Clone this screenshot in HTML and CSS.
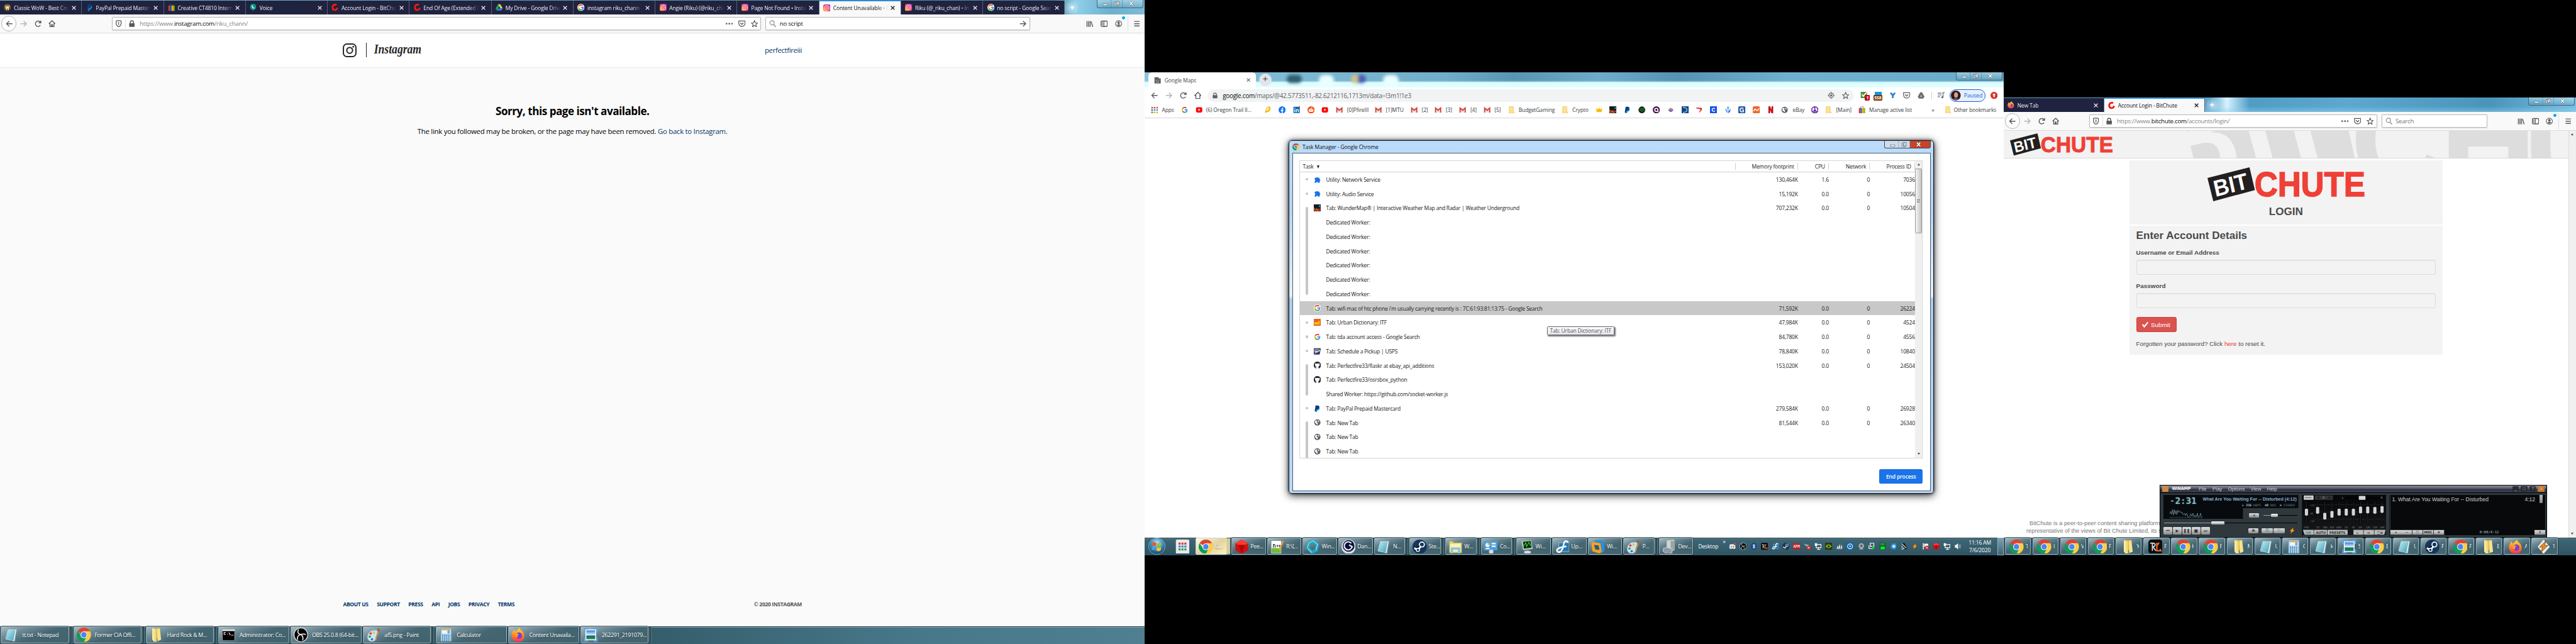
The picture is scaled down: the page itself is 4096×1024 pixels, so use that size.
FILE: index.html
```html
<!DOCTYPE html>
<html lang="en">
<head>
<meta charset="utf-8">
<title>Desktop</title>
<link rel="stylesheet" href="styles.css">
</head>
<body>
<svg class="defs" width="0" height="0">
<defs>
<linearGradient id="gIg" x1="0" y1="1" x2="1" y2="0"><stop offset="0" stop-color="#ffd04a"/><stop offset=".4" stop-color="#f5413a"/><stop offset=".7" stop-color="#d62f9a"/><stop offset="1" stop-color="#7a3be0"/></linearGradient>
<linearGradient id="gFf" x1="0" y1="0" x2="0" y2="1"><stop offset="0" stop-color="#ffe14a"/><stop offset=".5" stop-color="#ff8a1f"/><stop offset="1" stop-color="#ff2d5a"/></linearGradient>
<linearGradient id="gNote" x1="0" y1="0" x2="1" y2="1"><stop offset="0" stop-color="#c6f0f8"/><stop offset="1" stop-color="#3fa0b8"/></linearGradient>
<linearGradient id="gFold" x1="0" y1="0" x2="1" y2="0"><stop offset="0" stop-color="#fdf3b0"/><stop offset="1" stop-color="#e5c04f"/></linearGradient>
<linearGradient id="gSky" x1="0" y1="0" x2="0" y2="1"><stop offset="0" stop-color="#2f7fd8"/><stop offset=".55" stop-color="#e8f6ff"/><stop offset=".6" stop-color="#1c6b4c"/><stop offset="1" stop-color="#1d8f7d"/></linearGradient>
<radialGradient id="gOrb" cx=".5" cy=".3" r=".75"><stop offset="0" stop-color="#bfe6f5"/><stop offset=".5" stop-color="#3f88b5"/><stop offset="1" stop-color="#0d3a5c"/></radialGradient>
<symbol id="chrome" viewBox="0 0 32 32"><path fill="#db4437" d="M16 16 2.1 8a16 16 0 0 1 27.8 0z"/><path fill="#ffcd40" d="M16 16 15 8h14.9A16 16 0 0 1 16 32z"/><path fill="#0f9d58" d="M16 16 22 20 16 32A16 16 0 0 1 2.1 8l7 11z"/><circle cx="16" cy="16" r="7.5" fill="#f4f6fb"/><circle cx="16" cy="16" r="6" fill="#4a86ee"/></symbol>
<symbol id="firefox" viewBox="0 0 32 32"><path fill="url(#gFf)" d="M18 0c1 5 6 6 9 11 5 9 1 20-10 21C6 33-1 24 1 14c1-4 3-7 6-10 0 2 1 4 2 5 2-3 6-4 9-9z"/><circle cx="17" cy="18" r="7" fill="#7540d6"/><path fill="#ff9a2a" d="M8 14c4-3 8-1 9 2-3 0-4 2-2 5-5 2-8-2-7-7z"/></symbol>
<symbol id="notepad" viewBox="0 0 32 32"><path fill="#8b9a9e" d="m9 3 19-1-4 29-4 1z"/><path fill="#f5fafb" d="M9 3 27 4 22 30 3 26z"/><path fill="url(#gNote)" d="M8 4 25 5 20 29 2 25z"/><path stroke="#6f7f84" stroke-width="1.5" stroke-dasharray="1.5 1.5" d="M9 3h18"/></symbol>
<symbol id="folder" viewBox="0 0 32 32"><path fill="#d8b04a" d="M8 1h14l2 24-3 6z"/><path fill="url(#gFold)" d="m7 1 10 3v26l3 1-9 1-4-6z"/><path fill="#f7e38d" d="m18 3 6-2 3 26-8 3z"/></symbol>
<symbol id="cmd" viewBox="0 0 32 32"><path fill="#8c9398" d="M1 3h30v26H1z"/><path fill="#dfe6ea" d="M2 4h28v3H2z"/><path d="M3 8h26v20H3z"/><path stroke="#fff" stroke-width="1.5" fill="none" d="M10 11H6v4h4M14 12v1m0 2v1m3-5 3 6m2 0h5"/></symbol>
<symbol id="obs" viewBox="0 0 32 32"><circle cx="16" cy="16" r="16" fill="#eee"/><circle cx="16" cy="16" r="14.5"/><path fill="none" stroke="#ddd" stroke-width="2.5" d="M11 4c-3 5-2 9 3 11 5 1 8-3 13 1M15 15c-5 3-8 5-6 12m5-12c6 2 8 6 6 13"/></symbol>
<symbol id="paint" viewBox="0 0 32 32"><path fill="#c9e4f3" stroke="#8fb9cf" d="M15 6c9-2 13 4 10 9-2 4-4 2-4 7 0 6-4 9-9 9C5 31 1 26 2 19S8 7 15 6z"/><circle cx="9" cy="13" r="2.6" fill="#e33"/><circle cx="16" cy="11" r="2.6" fill="#f5c22a"/><circle cx="7" cy="20" r="2.6" fill="#38a838"/><circle cx="12" cy="26" r="2.6" fill="#2d6fd0"/><path stroke="#c68a4e" stroke-width="3" d="m20 29 6-22"/><path fill="#a2622d" d="m24 7 2-7 3 2-1 7z"/></symbol>
<symbol id="calc" viewBox="0 0 32 32"><rect x="4" y="1" width="24" height="30" rx="2" fill="#b8dcf2" stroke="#4a87b5"/><path fill="#f59b2f" d="M6 3h20v3H6z"/><path fill="#e9f7ff" d="M7 6h18v7H7z"/><path stroke="#3a6fa5" stroke-width="2.4" stroke-dasharray="2.6 2" d="M7 17h19M7 21h19M7 25h19M7 29h19"/><path stroke="#135" d="M20 7h3v5h-3z" fill="none"/></symbol>
<symbol id="photo" viewBox="0 0 32 32"><path fill="#fff" d="M4 4h24v24H4z"/><path fill="url(#gSky)" d="M6 6h20v20H6z"/><path fill="none" stroke="#5aa6e8" stroke-width="3" d="M10 2H2v8m20-8h8v8M10 30H2v-8m20 8h8v-8"/></symbol>
<symbol id="steam" viewBox="0 0 32 32"><circle cx="16" cy="16" r="16" fill="#14355c"/><path stroke="#fff" stroke-width="4" d="m4 19 8 4 9-11"/><circle cx="21" cy="11" r="5.5" fill="#14355c" stroke="#fff" stroke-width="2.4"/><circle cx="12" cy="23" r="3.6" fill="#14355c" stroke="#fff" stroke-width="2"/></symbol>
<symbol id="rl" viewBox="0 0 32 32"><rect width="32" height="32" rx="7" fill="#0a0d10"/><path fill="none" stroke="#d9dfe0" stroke-width="2.4" d="M4 8h5v17M9 8c8-1 8 8 1 8l7 9"/><path fill="none" stroke="#ff6a1f" stroke-width="3" d="M19 7v18h9l-2-4M19 14l5-7"/></symbol>
<symbol id="bolt" viewBox="0 0 32 32"><path fill="#eee" d="m16 0 14 16-14 16L3 16z"/><path fill="#f28a1c" stroke="#5b3312" d="M22 2 7 17h7L9 30l17-17h-8z"/></symbol>
<symbol id="orb" viewBox="0 0 36 36"><circle cx="18" cy="18" r="17.5" fill="url(#gOrb)" stroke="#8fc4dc"/><path fill="#e8572b" d="M8 11c3-2 6-2 9 0l-1 7c-3-2-6-2-9 0z"/><path fill="#8fc63e" d="M19 11c3 2 6 2 9 0l-1 7c-3 2-6 2-9 0z"/><path fill="#3fa4e8" d="M7 20c3-2 6-2 9 0l-1 7c-3-2-5-2-8 0z"/><path fill="#fbc52c" d="M18 20c3 2 6 2 9 0l-1 7c-3 2-6 2-9 0z"/></symbol>
<symbol id="gridapp" viewBox="0 0 32 32"><rect x="1" width="30" height="32" rx="3" fill="#e8eaec"/><path stroke="#e33b2e" stroke-width="4.5" stroke-dasharray="4.5 2" d="M7 9h18"/><path stroke="#3a78e0" stroke-width="4.5" stroke-dasharray="4.5 2" d="M7 15.500h18"/><path stroke="#2ba24c" stroke-width="4.500" stroke-dasharray="4.500 2" d="M7 22h18"/></symbol>
<symbol id="gem" viewBox="0 0 32 32"><path fill="#d40f0f" d="m16 0 14 8v16l-14 8L2 24V8z"/><path fill="#ff3b30" d="m16 0 14 8-7 4H9L2 8z"/><path fill="#a80808" d="m9 12 14 0-7 20z"/></symbol>
<symbol id="npp" viewBox="0 0 32 32"><path fill="#fff" stroke="#777" d="M3 2h23v29H3z"/><path fill="#6abf3a" d="M4 19h21v11H4z"/><path stroke="#222" stroke-width="1.6" d="M8 18v-7c3-1 4 1 4 3v4m3-4h4m1 0h4m-7-2v4m5-4v4" fill="none"/><path stroke="#e9a13a" stroke-width="3.5" d="m21 24 9-21"/></symbol>
<symbol id="vortex" viewBox="0 0 32 32"><path fill="none" stroke="#1ea6c4" stroke-width="7" d="m16 4 10 7-2 13-10 4-9-9 2-11z"/><path fill="none" stroke="#7be0f0" stroke-width="2" d="m16 2 11 9-4 12M4 19 7 8l9-5m-2 26-9-9"/></symbol>
<symbol id="dan" viewBox="0 0 32 32"><circle cx="16" cy="16" r="16" fill="#d9dde2"/><circle cx="16" cy="14" r="13" fill="#0a1238"/><path fill="none" stroke="#eef" stroke-width="3" d="M22 8a9 9 0 1 0 2 8l-7-4"/></symbol>
<symbol id="explorer" viewBox="0 0 32 32"><path fill="#e9c862" d="M2 4h8l2 3h18v23H2z"/><path fill="#fdf0b0" d="M4 9h24v18H4z"/><path fill="none" stroke="#7fc6e8" stroke-width="5" d="M8 31V20h16v11"/></symbol>
<symbol id="panel" viewBox="0 0 32 32"><rect x="1" y="3" width="30" height="21" rx="2" fill="#4a9fe0"/><circle cx="9" cy="12" r="4.500" fill="#fff"/><path fill="#f59b2f" d="M9 12V6a6 6 0 0 1 6 6z"/><path stroke="#fff" stroke-width="3" d="M18 9h9m-9 6h9M5 20h8"/><circle cx="17" cy="27" r="5" fill="#d7dade"/></symbol>
<symbol id="monitor" viewBox="0 0 32 32"><path fill="#b9bfbd" d="m4 3 22-2 4 20-22 3z"/><path fill="#062b08" d="m8 5 17-2 2 15-17 2z"/><path fill="none" stroke="#37e03c" stroke-width="1.500" d="m9 15 5-8 2 9 5-10 4 8"/><ellipse cx="18" cy="28" rx="8" ry="3.500" fill="#d7dade"/></symbol>
<symbol id="fig" viewBox="0 0 32 32"><path fill="#2277b5" stroke="#bde" d="M8 7h23v20H8z"/><path fill="none" stroke="#fff" stroke-width="3.500" d="M29 6c-8-8-10 2-11 8S12 32 5 27c-5-6 5-10 20-12"/></symbol>
<symbol id="ring" viewBox="0 0 32 32"><path fill="#2a8ddb" d="m9 1 14 1 8 6v19l-9 4-6-3z"/><path fill="#f6a21d" d="M2 9q2-4 8-3l12 2 3 18q-3 6-9 4L4 26z"/><path fill="#205a8f" d="m8 12 10 1 2 10-9-1z"/></symbol>
<symbol id="tower" viewBox="0 0 32 32"><path fill="#cfd3d5" d="m10 2 14-2 4 2v22l-12 4-6-3z"/><path fill="#9da3a6" d="m19 5 9-3v22l-9 3z"/><path fill="#8f9ba3" stroke="#e5e9eb" d="m2 20 8-3 12 4v9l-10 2-10-5z"/><circle cx="21" cy="4" r="2" fill="#6fd03f"/></symbol>
<symbol id="wow" viewBox="0 0 16 16"><circle cx="8" cy="8" r="8" fill="#6d542c"/><path fill="none" stroke="#ffe9b0" stroke-width="2" d="m4 4 2 8 2-6 2 6 2-8"/></symbol>
<symbol id="paypal" viewBox="0 0 16 16"><path fill="#159fe0" d="M6 5h7c1 5-2 7-5 7l-1 4H4z"/><path fill="#133a80" d="M4 1h5c3 0 4 2 3 5s-3 4-6 4l-.7 4H2z"/></symbol>
<symbol id="bag" viewBox="0 0 16 16"><path fill="none" stroke="#555" d="M5 5V3a3 3 0 0 1 6 0v2"/><path fill="#e53238" d="M1 4h4v12H1z"/><path fill="#0064d2" d="M5 4h3v12H5z"/><path fill="#f5af02" d="M8 4h3.500v12H8z"/><path fill="#86b817" d="M11.500 4H15v12h-3.500z"/></symbol>
<symbol id="voice" viewBox="0 0 16 16"><path fill="#0f9688" d="M8 0a7 7 0 0 1 1 13.800V16l-3-2.300A7 7 0 0 1 8 0z"/><path fill="none" stroke="#fff" stroke-width="2" d="M5.500 4c0 3 2 5.500 5 6"/></symbol>
<symbol id="bc" viewBox="0 0 16 16"><path fill="none" stroke="#f01c0f" stroke-width="4" d="M11.500 2.500C6 .5 2 4 2.500 9c.5 5 6 6.500 9.500 3l1.500-3"/></symbol>
<symbol id="drive" viewBox="0 0 16 16"><path fill="#11a861" d="m5.500 1 2.800 4.700L3 15l-3-4.500z"/><path fill="#ffcf48" d="M5.500 1h5L16 10.500h-5z"/><path fill="#3777e3" d="M5.600 10.500H16L13.300 15H3z"/></symbol>
<symbol id="g" viewBox="0 0 16 16"><circle cx="8" cy="8" r="8" fill="#fff"/><path fill="none" stroke="#ea4335" stroke-width="2.500" d="M3.200 5.500A5.400 5.400 0 0 1 12 4.200"/><path fill="none" stroke="#fbbc05" stroke-width="2.500" d="M3.300 10.600a5.400 5.400 0 0 1 0-5.200"/><path fill="none" stroke="#34a853" stroke-width="2.500" d="M3.300 10.600a5.400 5.400 0 0 0 8.400 1.500"/><path fill="none" stroke="#4285f4" stroke-width="2.500" d="M8 8h5.300q0 3-2 4.400"/></symbol>
<symbol id="ig" viewBox="0 0 16 16"><rect width="16" height="16" rx="4" fill="url(#gIg)"/><rect x="3" y="3" width="10" height="10" rx="3" fill="none" stroke="#fff" stroke-width="1.300"/><circle cx="8" cy="8" r="2.300" fill="none" stroke="#fff" stroke-width="1.300"/></symbol>
<symbol id="x" viewBox="0 0 10 10"><path stroke="currentColor" stroke-width="1.700" d="m1 1 8 8m0-8L1 9"/></symbol>
<symbol id="back" viewBox="0 0 16 16"><path fill="none" stroke="currentColor" stroke-width="2" d="M15 8H2m6-6L2 8l6 6"/></symbol>
<symbol id="fwd" viewBox="0 0 16 16"><path fill="none" stroke="currentColor" stroke-width="2" d="M1 8h13M8 2l6 6-6 6"/></symbol>
<symbol id="reload" viewBox="0 0 16 16"><path fill="none" stroke="currentColor" stroke-width="2" d="M13 11a6 6 0 1 1 0-6m1-4v5H9"/></symbol>
<symbol id="home" viewBox="0 0 16 16"><path fill="none" stroke="currentColor" stroke-width="2" d="m1 8 7-6.500L15 8M3.500 7v8h9V7M7 15v-5h2v5"/></symbol>
<symbol id="chome" viewBox="0 0 16 16"><path fill="none" stroke="currentColor" stroke-width="2" d="m1 8 7-7 7 7h-2.500v7h-9V8z"/></symbol>
<symbol id="shield" viewBox="0 0 16 16"><path fill="none" stroke="currentColor" stroke-width="1.800" d="M2.500 2q5.500-2 11 0v5c0 4-2 6.500-5.500 8-3.500-1.500-5.500-4-5.500-8zM8 4v7"/></symbol>
<symbol id="lock" viewBox="0 0 16 16"><path fill="currentColor" d="M2 7h12v8H2z"/><path fill="none" stroke="currentColor" stroke-width="2" d="M4.500 8V5a3.500 3.500 0 0 1 7 0v3"/></symbol>
<symbol id="dots" viewBox="0 0 16 16"><path fill="currentColor" d="M0 6.500h3.500v3H0zm6.200 0h3.600v3H6.200zm6.300 0H16v3h-3.500z"/></symbol>
<symbol id="pocket" viewBox="0 0 16 16"><path fill="none" stroke="currentColor" stroke-width="1.800" d="M1 2h14v5c0 4-3 7-7 7s-7-3-7-7zM4.500 6 8 9.500 11.500 6"/></symbol>
<symbol id="star" viewBox="0 0 16 16"><path fill="none" stroke="currentColor" stroke-width="1.600" d="m8 1 2 5 5 .3-4 3.400L12.500 15 8 12l-4.500 3L5 9.700 1 6.300 6 6z"/></symbol>
<symbol id="mag" viewBox="0 0 16 16"><circle cx="6.500" cy="6" r="4.800" fill="none" stroke="currentColor" stroke-width="1.600"/><path stroke="currentColor" stroke-width="2" d="m10 10 5 5.500"/></symbol>
<symbol id="lib" viewBox="0 0 16 16"><path stroke="currentColor" stroke-width="2" d="M2 2v13M5.500 2v13M9 2v13m2-12 4 12"/></symbol>
<symbol id="side" viewBox="0 0 16 16"><rect x="1" y="2" width="14" height="12" rx="2" fill="none" stroke="currentColor" stroke-width="2"/><path stroke="currentColor" stroke-width="1.500" d="M7.500 2v12M3 5.500h3M3 8h3m-3 2.500h3"/></symbol>
<symbol id="acct" viewBox="0 0 16 16"><circle cx="8" cy="8" r="6.800" fill="none" stroke="currentColor" stroke-width="1.500"/><path fill="currentColor" d="M8 3a2.700 3 0 0 1 0 6 2.700 3 0 0 1 0-6zM3.500 11q4.500-3 9 0Q8 16 3.500 11z"/></symbol>
<symbol id="menu" viewBox="0 0 16 16"><path stroke="currentColor" stroke-width="2" d="M2 3h12M2 8h12M2 13h12"/></symbol>
<symbol id="win" viewBox="0 0 102 18"><path stroke="#3f5a6b88" d="M29.500 0v18M56.500 0v18"/><path fill="#fff" stroke="#4c5a66" d="M9.500 9.500h11v4h-11z"/><path fill="#fff" stroke="#4c5a66" d="M40.500 3.500h8v9h-8zM37.500 5.500h8v9h-8z"/><path fill="none" stroke="#4c5a66" d="M40.500 8.500h2v3h-2z"/><path stroke="#4c5a66" stroke-width="4" d="m74 4 8 9m0-9-8 9"/><path stroke="#fff" stroke-width="2.400" d="m74 4 8 9m0-9-8 9"/></symbol>
<symbol id="sad" viewBox="0 0 16 16"><path fill="#5f6368" d="M1 1h9l1 3h4v11H1z"/><path stroke="#fff" d="M5 7v2m5-2v2m-5 4q2.500-3 5 0" fill="none"/></symbol>
<symbol id="apps" viewBox="0 0 16 16"><path stroke="#ea4335" stroke-width="3.500" stroke-dasharray="3.500 2.200" d="M1 3h15"/><path stroke="#4285f4" stroke-width="3.500" stroke-dasharray="3.500 2.200" d="M1 8.500h15"/><path stroke="#f0a80a" stroke-width="3.500" stroke-dasharray="3.500 2.200" d="M1 14h15"/><path fill="#34a853" d="M1 6.700h3.500v3.500H1zM1 12.200h3.500v3.500H1z"/></symbol>
<symbol id="yt" viewBox="0 0 16 16"><rect x="1" y="2" width="14" height="12" rx="3" fill="#f00"/><path fill="#fff" d="m6.500 5 4 3-4 3z"/></symbol>
<symbol id="bubble" viewBox="0 0 16 16"><path fill="#f3b81a" d="M9 1c5-2 6 2 5 6s-4 6-7 6l-5 2 1-5c0-4 2-7 6-9z"/><path fill="#ffe98a" d="M8 3c3-1 4 0 3 3s-4 5-6 4 0-6 3-7z"/></symbol>
<symbol id="fb" viewBox="0 0 16 16"><circle cx="8" cy="8" r="8" fill="#1877f2"/><path fill="#fff" d="M7 16v-5.500H5V8h2V6q0-3 3.500-2.800V5.400Q9 5.300 9 6.500V8h2l-.4 2.500H9V16z"/></symbol>
<symbol id="li" viewBox="0 0 16 16"><path fill="#0a6ab4" d="M1 1h14v14H1z"/><path stroke="#fff" stroke-width="2" fill="none" d="M4 7v6M4 3.500v2M7.500 13V7m0 3c0-4 4.500-3 4.500 0v3"/><circle cx="14" cy="2" r="2" fill="#e3342f"/></symbol>
<symbol id="reddit" viewBox="0 0 16 16"><circle cx="8" cy="8" r="8" fill="#ff4500"/><ellipse cx="8" cy="9" rx="5.500" ry="3.800" fill="#fff"/><circle cx="6" cy="8.500" r="1" fill="#ff4500"/><circle cx="10" cy="8.500" r="1" fill="#ff4500"/><path stroke="#fff" d="m8 6 1-4 2 1" fill="none"/></symbol>
<symbol id="gmail" viewBox="0 0 16 16"><path fill="#e6e6e6" d="M1 3h14v11H1z"/><path fill="none" stroke="#d93f34" stroke-width="2.600" d="M2.300 14V4L8 9l5.700-5v10"/></symbol>
<symbol id="bfold" viewBox="0 0 16 16"><path fill="#fde293" stroke="#e8c14d" d="M2.500.5h9v12h2v3h-11z"/></symbol>
<symbol id="crown" viewBox="0 0 16 16"><path fill="#fbbc04" d="m1 4 4 3 3-4 3 4 4-3-1.500 9h-11z"/></symbol>
<symbol id="wu" viewBox="0 0 16 16"><path fill="#171b1f" d="M0 0h16v16H0z"/><path fill="none" stroke="#f4691f" stroke-width="2" d="M1 8q1 6 2.500 6T6 9q1 5 2.500 5L10 12"/><path fill="none" stroke="#f8402c" stroke-width="2" d="M9.500 9v3q1.500 3 4 0V9"/><path fill="#25b5ec" d="M13 1q3 5 0 5t0-5z"/></symbol>
<symbol id="hex" viewBox="0 0 16 16"><circle cx="8" cy="8" r="7.500" fill="#111"/><path stroke="#1ea33a" stroke-width="1.500" d="M4 11V4m3 9V3m3 10V3m3 8V4"/></symbol>
<symbol id="aicon" viewBox="0 0 16 16"><circle cx="8" cy="8" r="8" fill="#4a154b"/><path fill="none" stroke="#fff" stroke-width="2.200" d="M11.500 13V8A3.500 3.500 0 1 0 8 11.500h3"/></symbol>
<symbol id="boa" viewBox="0 0 16 16"><path fill="#e23b4a" d="m2 7 6-4 6 4-6 2z"/><path fill="#3159b8" d="m2 9 6 4 6-4-6-2z"/><path stroke="#fff" d="m4 6 6 4m-3-6 5 4"/></symbol>
<symbol id="moon" viewBox="0 0 16 16"><path fill="#14467f" d="M0 0h16v16H0z"/><path fill="none" stroke="#7ac3ea" stroke-width="2" d="M3 2q9 1 9 6t-9 6"/></symbol>
<symbol id="seven" viewBox="0 0 16 16"><path fill="#d8232f" d="M1 3h10q5 1 3 5l-5 6-1-1 3-5q0-2-3-2l-6-1z"/></symbol>
<symbol id="csq" viewBox="0 0 16 16"><path fill="#1652f0" d="M0 0h16v16H0z"/><path fill="none" stroke="#fff" stroke-width="2" d="M11 6a3.400 3.400 0 1 0 0 4"/></symbol>
<symbol id="tri" viewBox="0 0 16 16"><path fill="#6aa6f2" d="m8 0 3 4-3 4-3-4zm-7 5 6 4v7L3 11zm14 0L9 9v7l4-5z"/><path fill="#2c62c4" d="M9 9v7l4-5z"/></symbol>
<symbol id="gsq" viewBox="0 0 16 16"><rect width="16" height="16" rx="3" fill="#1f57a8"/><path fill="none" stroke="#fff" stroke-width="2" d="M12 5Q10 3.500 7 3.800 3.500 4.500 4 8.500q.5 4 4.500 4l3-.5V8.500H8"/></symbol>
<symbol id="nam" viewBox="0 0 16 16"><rect width="16" height="16" rx="3" fill="#f1672a"/><path fill="none" stroke="#fff" stroke-width="2" d="m2 11 3-5 5 4 4-5"/></symbol>
<symbol id="nf" viewBox="0 0 16 16"><path stroke="#b20710" stroke-width="3.500" d="M4.500 0v16m7-16v16"/><path stroke="#e50914" stroke-width="3.500" d="m4.500 0 7 16"/></symbol>
<symbol id="globe" viewBox="0 0 16 16"><circle cx="8" cy="8" r="7" fill="#5f6368"/><path fill="#fff" d="M3 5q4-3 5 0L6 7l3 2q0 4-2 4-1-3-4-4zm7-2 3 3-3 1-1-2z"/></symbol>
<symbol id="peace" viewBox="0 0 16 16"><circle cx="8" cy="8" r="7" fill="#fff" stroke="#5a189a" stroke-width="2"/><path stroke="#5a189a" stroke-width="2" d="M8 1v14M8 8l-5 5m5-5 5 5"/></symbol>
<symbol id="puzzle" viewBox="0 0 16 16"><path fill="#1a73e8" d="M2 4h3a2.400 2.400 0 0 1 4.500 0H13v3.500a2.300 2.300 0 0 1 0 4.400V15H9.800a2.300 2.300 0 0 0-4.500 0H2v-3.300a2.300 2.300 0 0 0 0-4.200z"/></symbol>
<symbol id="usps" viewBox="0 0 16 16"><path fill="#333366" d="M0 1h16l-3 14H0z"/><path fill="none" stroke="#fff" stroke-width="1.600" d="M1 4.500h10l3 2M2 12l11-5M1 8h7"/></symbol>
<symbol id="gh" viewBox="0 0 16 16"><path fill="#24292e" d="M8 0a8 8 0 0 0-2.500 15.600V13C3 13.500 2.500 12 2.500 12l1-.3c1 1.500 2 1 2 .7 0-.8.200-1.200.500-1.400-3-.5-3.500-2.500-3-5L3 3.500l2.500 1q2.500-.7 5 0l2.500-1V6c.5 2.500 0 4.500-3 5 .4.500.5 1 .5 4.600A8 8 0 0 0 8 0z"/></symbol>
<symbol id="loc" viewBox="0 0 16 16"><circle cx="8" cy="8" r="5" fill="none" stroke="currentColor" stroke-width="1.500"/><circle cx="8" cy="8" r="2.500" fill="currentColor"/><path stroke="currentColor" stroke-width="1.500" d="M8 0v3m0 10v3M0 8h3m10 0h3"/></symbol>
<symbol id="gcheck" viewBox="0 0 16 16"><path fill="#4b9b3c" d="M1 0h14v14H1z"/><path fill="none" stroke="#fff" stroke-width="2.500" d="m4 6 3 4 7-9"/></symbol>
<symbol id="bsq" viewBox="0 0 16 16"><path fill="#0a9bea" d="M0 0h16v10H0z"/></symbol>
<symbol id="ymk" viewBox="0 0 16 16"><path fill="none" stroke="#1c75d8" stroke-width="3.500" d="m3 2 5 6 5-6M8 8v6"/></symbol>
<symbol id="gdrive" viewBox="0 0 16 16"><path fill="#6f6f6f" d="M6 1h4l5.500 9.500L13 15H3L.5 10.500z"/><path fill="#ddd" d="m8 7 2 4H6z"/></symbol>
<symbol id="music" viewBox="0 0 16 16"><path stroke="currentColor" stroke-width="1.600" fill="none" d="M0 3h9M0 7h9M0 11h5m7 1V2h4"/><circle cx="10.500" cy="12" r="2.300" fill="currentColor"/></symbol>
<symbol id="up" viewBox="0 0 16 16"><circle cx="8" cy="8" r="8" fill="#d93025"/><path fill="#fff" d="m8 3 4 4.500H9.500V12h-3V7.500H4z"/></symbol>
<symbol id="t-discord" viewBox="0 0 16 16"><path fill="#eee" d="M2 4q6-2 12 0l1 8-3 2-2-1H6l-2 1-3-2z"/><circle cx="5.500" cy="9" r="1.300" fill="#345"/><circle cx="10.500" cy="9" r="1.300" fill="#345"/><circle cx="13" cy="3" r="2.500" fill="#f33"/></symbol>
<symbol id="t-bt" viewBox="0 0 16 16"><ellipse cx="8" cy="8" rx="6" ry="8" fill="#12408a"/><path fill="none" stroke="#fff" stroke-width="1.300" d="m5 5 6 5-3 3V3l3 3-6 5"/></symbol>
<symbol id="t-apm" viewBox="0 0 16 16"><path fill="#c01f26" d="M0 1h16v14H0z"/><path fill="none" stroke="#fff" stroke-width="1.200" d="M1.500 11 3 5l1.500 6M6.500 11V5q3 0 3 1.700T6.500 8.500M11 11V5l1.700 3L14.500 5v6"/></symbol>
<symbol id="t-redx" viewBox="0 0 16 16"><path fill="#aab0b3" d="m0 2 11 3 3 6-6-1z"/><circle cx="11" cy="11" r="4.500" fill="#d22"/><path stroke="#fff" stroke-width="1.300" d="m9 9 4 4m0-4-4 4"/></symbol>
<symbol id="t-net" viewBox="0 0 16 16"><path fill="none" stroke="#fff" stroke-width="1.600" d="M4 4h11v7H4zM9 11v4m-3 0h7"/><path fill="#fff" d="M1 1h5v6H1z"/></symbol>
<symbol id="t-nv" viewBox="0 0 16 16"><path fill="#2b3420" d="M0 0h16v16H0z"/><path fill="#76b900" d="M1 8q6-9 14 0-8 8-14 0z"/><circle cx="8" cy="8" r="2.500" fill="#2b3420"/></symbol>
<symbol id="t-sail" viewBox="0 0 16 16"><path fill="#eee" d="m2 12 3-6 1 6zm4 0 3-10 1 10zm5 0 2-8 2 8zM1 13h14l-2 1H2z"/></symbol>
<symbol id="t-eye" viewBox="0 0 16 16"><path fill="#1560a8" d="M0 0h16v16H0z"/><circle cx="8" cy="8" r="5.500" fill="none" stroke="#dff" stroke-width="1.700"/><circle cx="8" cy="8" r="2" fill="#9df"/></symbol>
<symbol id="t-cam" viewBox="0 0 16 16"><circle cx="8" cy="7" r="6" fill="#a9afb2"/><circle cx="8" cy="7" r="3" fill="#5b646a"/><path fill="#a9afb2" d="M4 13h8v2H4z"/></symbol>
<symbol id="t-play" viewBox="0 0 16 16"><path fill="none" stroke="#fff" stroke-width="1.600" d="M4 1h8v7H4zM1 6v7h8"/><path fill="#22c13a" d="m8 6 7 5-7 5z"/></symbol>
<symbol id="t-grid" viewBox="0 0 16 16"><path fill="#063f0d" d="M2 0h12v16H2z"/><path stroke="#37f04a" stroke-width="2" stroke-dasharray="2 1" d="M3 2h10M3 5h10"/><path fill="#12e32c" d="M3 8h10v7H3z"/></symbol>
<symbol id="t-gem" viewBox="0 0 16 16"><path fill="#2b8fd6" d="m5 2 8-1 2 8-3 6-8-1-3-6z"/><circle cx="9" cy="8" r="3.500" fill="#bfe9ff"/></symbol>
<symbol id="t-dish" viewBox="0 0 16 16"><path fill="#0b0f12" d="m3 1 6 0 6 12-4 2z"/><path stroke="#eee" stroke-width="1.500" fill="none" d="m3 2 10 10M2 8l3 3M2 14q5 1 6-3"/></symbol>
<symbol id="t-bolt" viewBox="0 0 16 16"><path fill="#f6a62a" stroke="#7a4a10" d="m11 1-9 8h4l-2 6 10-8h-4z"/></symbol>
<symbol id="t-flag" viewBox="0 0 16 16"><path fill="#fff" d="M2 1h2v14H2zm3 1h9v7H5z"/><circle cx="11" cy="11" r="4.500" fill="#d22"/><path stroke="#fff" stroke-width="1.300" d="m9 9 4 4m0-4-4 4"/></symbol>
<symbol id="t-vol" viewBox="0 0 16 16"><path fill="#fff" d="M2 5h3l4-4v14l-4-4H2z"/><path fill="none" stroke="#dde" d="M11 5q2 3 0 6m2-8q3 5 0 10"/></symbol>
<symbol id="bitchute" viewBox="0 0 352 76"><path fill="#231f20" d="M0 24 94 0l12 51-93 25z"/><g transform="matrix(1 -.257 .22 1 18 66)"><text class="bit" textLength="75" lengthAdjust="spacingAndGlyphs">BIT</text></g><text class="chute" x="105" y="65" textLength="248" lengthAdjust="spacingAndGlyphs">CHUTE</text><path fill="#f3f3f3" d="m106 51 20-14-6 10 18-7-4-12 8-2z"/></symbol>
</defs>
</svg>

<main class="desk">
<section class="mon one">
  <div class="tabs">
    <div class="tab"><svg><use href="#wow"/></svg><span>Classic WoW - Best Cook</span><svg class="cl"><use href="#x"/></svg></div>
    <div class="tab"><svg><use href="#paypal"/></svg><span>PayPal Prepaid Mastercar</span><svg class="cl"><use href="#x"/></svg></div>
    <div class="tab"><svg><use href="#bag"/></svg><span>Creative CT4810 Internal</span><svg class="cl"><use href="#x"/></svg></div>
    <div class="tab"><svg><use href="#voice"/></svg><span>Voice</span><svg class="cl"><use href="#x"/></svg></div>
    <div class="tab"><svg><use href="#bc"/></svg><span>Account Login - BitChute</span><svg class="cl"><use href="#x"/></svg></div>
    <div class="tab"><svg><use href="#bc"/></svg><span>End Of Age (Extended Di</span><svg class="cl"><use href="#x"/></svg></div>
    <div class="tab"><svg><use href="#drive"/></svg><span>My Drive - Google Drive</span><svg class="cl"><use href="#x"/></svg></div>
    <div class="tab"><svg><use href="#g"/></svg><span>instagram riku_chann - G</span><svg class="cl"><use href="#x"/></svg></div>
    <div class="tab"><svg><use href="#ig"/></svg><span>Angie (Riku) (@riku_chan</span><svg class="cl"><use href="#x"/></svg></div>
    <div class="tab"><svg><use href="#ig"/></svg><span>Page Not Found • Instagr</span><svg class="cl"><use href="#x"/></svg></div>
    <div class="tab on"><svg><use href="#ig"/></svg><span>Content Unavailable • Ins</span><svg class="cl"><use href="#x"/></svg></div>
    <div class="tab"><svg><use href="#ig"/></svg><span>Riku (@_riku_chan) • Inst</span><svg class="cl"><use href="#x"/></svg></div>
    <div class="tab"><svg><use href="#g"/></svg><span>no script - Google Search</span><svg class="cl"><use href="#x"/></svg></div>
    <div class="glow">+</div>
    <svg class="winb"><use href="#win"/></svg>
  </div>
  <div class="nav">
    <div class="nb"><i class="circ"><svg><use href="#back"/></svg></i><svg class="dim"><use href="#fwd"/></svg><svg><use href="#reload"/></svg><svg><use href="#home"/></svg></div>
    <div class="url"><svg><use href="#shield"/></svg><i class="sep"></i><svg class="lk"><use href="#lock"/></svg><span class="addr">https://www.<b>instagram.com</b>/riku_chann/</span><svg><use href="#dots"/></svg><svg><use href="#pocket"/></svg><svg><use href="#star"/></svg></div>
    <div class="find"><svg><use href="#mag"/></svg><span>no script</span><svg class="go"><use href="#fwd"/></svg></div>
    <div class="tools"><svg><use href="#lib"/></svg><svg><use href="#side"/></svg><svg class="ac"><use href="#acct"/></svg><i></i><svg><use href="#menu"/></svg><u></u></div>
  </div>
  <div class="ighead"><div class="igin">
    <svg class="cam" viewBox="0 0 31 31"><rect x="1.500" y="1.500" width="28" height="28" rx="7.500" fill="none" stroke="#262626" stroke-width="2.800"/><circle cx="15.500" cy="15.500" r="6.500" fill="none" stroke="#262626" stroke-width="2.800"/><circle cx="23.500" cy="7.500" r="2" fill="#262626"/></svg>
    <i></i><svg class="word" viewBox="0 0 110 36"><text x="1" y="23" textLength="106" lengthAdjust="spacingAndGlyphs">Instagram</text></svg>
    <a>perfectfireiii</a></div></div>
  <div class="igbody"><h1>Sorry, this page isn't available.</h1><p>The link you followed may be broken, or the page may have been removed. <a>Go back to Instagram.</a></p>
    <footer><a>ABOUT US</a><a>SUPPORT</a><a>PRESS</a><a>API</a><a>JOBS</a><a>PRIVACY</a><a>TERMS</a><span>© 2020 INSTAGRAM</span></footer></div>
  <div class="bar">
    <div class="tb st"><svg><use href="#notepad"/></svg><span>tt.txt - Notepad</span></div>
    <div class="tb st"><svg><use href="#chrome"/></svg><span>Former CIA Offi...</span></div>
    <div class="tb st"><svg><use href="#folder"/></svg><span>Hard Rock &amp; M...</span></div>
    <div class="tb"><svg><use href="#cmd"/></svg><span>Administrator: Co...</span></div>
    <div class="tb"><svg><use href="#obs"/></svg><span>OBS 25.0.8 (64-bit...</span></div>
    <div class="tb st"><svg><use href="#paint"/></svg><span>af5.png - Paint</span></div>
    <div class="tb"><svg><use href="#calc"/></svg><span>Calculator</span></div>
    <div class="tb"><svg><use href="#firefox"/></svg><span>Content Unavaila...</span></div>
    <div class="tb st"><svg><use href="#photo"/></svg><span>262291_2191079...</span></div>
  </div>
</section>

<section class="mon two">
  <div class="cstrip"><div class="ctab"><svg><use href="#sad"/></svg><span>Google Maps</span><svg class="cl"><use href="#x"/></svg></div><div class="plus">+</div><div class="blobs"><i></i><i></i><i></i><i></i><i></i></div><svg class="winb"><use href="#win"/></svg></div>
  <div class="cnav"><svg><use href="#back"/></svg><svg class="dim"><use href="#fwd"/></svg><svg><use href="#reload"/></svg><svg><use href="#chome"/></svg>
    <div class="omni"><svg class="lk"><use href="#lock"/></svg><span><b>google.com</b>/maps/@42.5773511,-82.6212116,1713m/data=!3m1!1e3</span><svg><use href="#loc"/></svg><svg><use href="#star"/></svg></div>
    <div class="ext"><i><svg><use href="#gcheck"/></svg><em class="r">1</em></i><i><svg><use href="#bsq"/></svg><em>558</em></i><svg><use href="#ymk"/></svg><svg><use href="#pocket"/></svg><svg><use href="#gdrive"/></svg><u></u><svg><use href="#music"/></svg></div>
    <div class="pill"><svg viewBox="0 0 20 20"><circle cx="10" cy="10" r="10" fill="#2d1a1a"/><ellipse cx="10.500" cy="9" rx="4" ry="5.500" fill="#d8a08a"/><path fill="#6b5560" d="M4 18q6-6 12 0-6 4-12 0z"/></svg>Paused</div><svg class="upd"><use href="#up"/></svg></div>
  <div class="marks">
    <svg><use href="#apps"/></svg><span>Apps</span><svg><use href="#g"/></svg><svg><use href="#yt"/></svg><span>(6) Oregon Trail II...</span>
    <svg><use href="#bubble"/></svg><svg><use href="#fb"/></svg><svg><use href="#li"/></svg><svg><use href="#reddit"/></svg><svg><use href="#yt"/></svg>
    <svg><use href="#gmail"/></svg><span>[0]PfireIII</span><svg><use href="#gmail"/></svg><span>[1]MTU</span><svg><use href="#gmail"/></svg><span>[2]</span><svg><use href="#gmail"/></svg><span>[3]</span><svg><use href="#gmail"/></svg><span>[4]</span><svg><use href="#gmail"/></svg><span>[5]</span>
    <svg><use href="#bfold"/></svg><span>BudgetGaming</span><svg><use href="#bfold"/></svg><span>Crypto</span>
    <svg><use href="#crown"/></svg><svg><use href="#wu"/></svg><svg><use href="#paypal"/></svg><svg><use href="#hex"/></svg><svg><use href="#aicon"/></svg><svg><use href="#boa"/></svg><svg><use href="#moon"/></svg><svg><use href="#seven"/></svg><svg><use href="#csq"/></svg><svg><use href="#tri"/></svg><svg><use href="#gsq"/></svg><svg><use href="#nam"/></svg><svg><use href="#nf"/></svg>
    <svg><use href="#globe"/></svg><span>eBay</span><svg><use href="#peace"/></svg><svg><use href="#bfold"/></svg><span>[Main]</span><svg><use href="#bag"/></svg><span>Manage active list</span><span>»</span><svg><use href="#bfold"/></svg><span>Other bookmarks</span>
  </div>
  <div class="cpage">
    <div class="tm">
      <div class="tmt"><svg><use href="#chrome"/></svg><span>Task Manager - Google Chrome</span><svg class="winb"><use href="#win"/></svg></div>
      <div class="tmc">
        <div class="tbl">
          <div class="list">
            <div class="row hd"><b>Task<i></i></b><span>Memory footprint</span><span>CPU</span><span>Network</span><span>Process ID</span></div>
            <div class="grp"><div class="row"><svg><use href="#puzzle"/></svg><b>Utility: Network Service</b><span>130,464K</span><span>1.6</span><span>0</span><span>7036</span></div></div>
            <div class="grp"><div class="row"><svg><use href="#puzzle"/></svg><b>Utility: Audio Service</b><span>15,192K</span><span>0.0</span><span>0</span><span>10056</span></div></div>
            <div class="grp"><div class="row"><svg><use href="#wu"/></svg><b>Tab: WunderMap® | Interactive Weather Map and Radar | Weather Underground</b><span>707,232K</span><span>0.0</span><span>0</span><span>10504</span></div>
              <div class="row"><b>Dedicated Worker:</b></div><div class="row"><b>Dedicated Worker:</b></div><div class="row"><b>Dedicated Worker:</b></div><div class="row"><b>Dedicated Worker:</b></div><div class="row"><b>Dedicated Worker:</b></div><div class="row"><b>Dedicated Worker:</b></div></div>
            <div class="row sel"><svg><use href="#g"/></svg><b>Tab: wifi mac of htc phone i'm usually carrying recently is : 7C:61:93:81:13:75 - Google Search</b><span>71,592K</span><span>0.0</span><span>0</span><span>26224</span></div>
            <div class="grp"><div class="row"><svg viewBox="0 0 16 16"><path fill="#e86222" d="M0 0h16v16H0z"/><text class="ud" x="1" y="12">ud</text></svg><b>Tab: Urban Dictionary: ITF</b><span>47,984K</span><span>0.0</span><span>0</span><span>4524</span></div></div>
            <div class="grp"><div class="row"><svg><use href="#g"/></svg><b>Tab: tda account access - Google Search</b><span>84,780K</span><span>0.0</span><span>0</span><span>4556</span></div></div>
            <div class="grp"><div class="row"><svg><use href="#usps"/></svg><b>Tab: Schedule a Pickup | USPS</b><span>78,840K</span><span>0.0</span><span>0</span><span>10840</span></div></div>
            <div class="grp"><div class="row"><svg><use href="#gh"/></svg><b>Tab: Perfectfire33/flaskr at ebay_api_additions</b><span>153,020K</span><span>0.0</span><span>0</span><span>24504</span></div>
              <div class="row"><svg><use href="#gh"/></svg><b>Tab: Perfectfire33/osrsbox_python</b></div><div class="row"><b>Shared Worker: https://github.com/socket-worker.js</b></div></div>
            <div class="grp"><div class="row"><svg><use href="#paypal"/></svg><b>Tab: PayPal Prepaid Mastercard</b><span>279,584K</span><span>0.0</span><span>0</span><span>26928</span></div></div>
            <div class="grp open"><div class="row"><svg><use href="#globe"/></svg><b>Tab: New Tab</b><span>81,544K</span><span>0.0</span><span>0</span><span>26340</span></div><div class="row"><svg><use href="#globe"/></svg><b>Tab: New Tab</b></div><div class="row"><svg><use href="#globe"/></svg><b>Tab: New Tab</b></div></div>
          </div>
          <div class="scr"><i class="ua"></i><div class="thumb"></div><i class="da"></i></div>
        </div>
        <button class="end">End process</button>
      </div>
      <div class="tip">Tab: Urban Dictionary: ITF</div>
    </div>
  </div>
  <div class="bar two">
    <svg class="orb"><use href="#orb"/></svg><svg class="ga"><use href="#gridapp"/></svg>
    <div class="tb st hot"><svg><use href="#chrome"/></svg><span>G...</span></div>
    <div class="tb"><svg><use href="#gem"/></svg><span>Pee...</span></div>
    <div class="tb"><svg><use href="#npp"/></svg><span>R:\[...</span></div>
    <div class="tb"><svg><use href="#vortex"/></svg><span>Win...</span></div>
    <div class="tb"><svg><use href="#dan"/></svg><span>Dan...</span></div>
    <div class="tb st"><svg><use href="#notepad"/></svg><span>N...</span></div>
    <div class="tb st"><svg><use href="#steam"/></svg><span>Ste...</span></div>
    <div class="tb st"><svg><use href="#explorer"/></svg><span>W...</span></div>
    <div class="tb st"><svg><use href="#panel"/></svg><span>Co...</span></div>
    <div class="tb"><svg><use href="#monitor"/></svg><span>Wi...</span></div>
    <div class="tb"><svg><use href="#fig"/></svg><span>Up...</span></div>
    <div class="tb"><svg><use href="#ring"/></svg><span>Wi...</span></div>
    <div class="tb st"><svg><use href="#paint"/></svg><span>P...</span></div>
    <div class="tb"><svg><use href="#tower"/></svg><span>Dev...</span></div>
    <div class="desklbl">Desktop<sup>»</sup></div>
    <div class="tray"><svg><use href="#t-discord"/></svg><svg><use href="#obs"/></svg><svg><use href="#t-bt"/></svg><svg><use href="#rl"/></svg><svg><use href="#fig"/></svg><svg><use href="#steam"/></svg><svg><use href="#t-apm"/></svg><svg><use href="#t-redx"/></svg><svg><use href="#t-net"/></svg><svg><use href="#t-nv"/></svg><svg><use href="#t-sail"/></svg><svg><use href="#t-eye"/></svg><svg><use href="#t-cam"/></svg><svg><use href="#t-play"/></svg><svg><use href="#t-grid"/></svg><svg><use href="#t-gem"/></svg><svg><use href="#t-dish"/></svg><svg><use href="#t-bolt"/></svg><svg><use href="#t-flag"/></svg><svg><use href="#gem"/></svg><svg><use href="#t-net"/></svg><svg><use href="#t-vol"/></svg></div>
    <div class="clock">11:16 AM<br>7/6/2020</div><div class="peek"></div>
  </div>
</section>

<section class="mon three">
  <div class="tabs">
    <div class="tab"><svg><use href="#firefox"/></svg><span>New Tab</span><svg class="cl"><use href="#x"/></svg></div>
    <div class="tab on"><svg><use href="#bc"/></svg><span>Account Login - BitChute</span><svg class="cl"><use href="#x"/></svg></div>
    <div class="glow">+</div>
    <svg class="winb"><use href="#win"/></svg>
  </div>
  <div class="nav">
    <div class="nb"><i class="circ"><svg><use href="#back"/></svg></i><svg class="dim"><use href="#fwd"/></svg><svg><use href="#reload"/></svg><svg><use href="#home"/></svg></div>
    <div class="url"><svg><use href="#shield"/></svg><i class="sep"></i><svg class="lk"><use href="#lock"/></svg><span class="addr">https://www.<b>bitchute.com</b>/accounts/login/</span><svg><use href="#dots"/></svg><svg><use href="#pocket"/></svg><svg><use href="#star"/></svg></div>
    <div class="find ph"><svg><use href="#mag"/></svg><span>Search</span></div>
    <div class="tools"><svg><use href="#lib"/></svg><svg><use href="#side"/></svg><svg class="ac"><use href="#acct"/></svg><i></i><svg><use href="#menu"/></svg><u></u></div>
  </div>
  <div class="bcrow">
    <div class="bcpage">
      <header><svg class="lg"><use href="#bitchute"/></svg>
        <svg class="wm" viewBox="0 0 853 61"><path fill="#ddd" d="M0 0h362l14 61H15z"/><g transform="matrix(.8 -.2 .27 1 -38 143)"><text class="wb" x="0 232 300">BIT</text></g><text class="wc" x="366 566 752" y="124">CHU</text></svg></header>
      <div class="card top"><svg class="lg"><use href="#bitchute"/></svg><h2>LOGIN</h2></div>
      <div class="card form"><h2>Enter Account Details</h2><label>Username or Email Address</label><div class="inp"></div><label>Password</label><div class="inp"></div>
        <button><svg viewBox="0 0 14 14"><path d="m1 7 4 5 8-10" fill="none" stroke="#fff" stroke-width="3"/></svg>Submit</button><p>Forgotten your password? Click <a>here</a> to reset it.</p></div>
      <div class="legal"><p>BitChute is a peer-to-peer content sharing platform. C</p><p>representative of the views of Bit Chute Limited, its staf</p></div>
    </div>
    <div class="bcscr"><i class="ua"></i><i class="da"></i></div>
  </div>
  <div class="wa">
    <div class="wt"><em></em><b>WINAMP</b><span>File</span><span>Play</span><span>Options</span><span>View</span><span>Help</span><div><i>_</i><i>□</i><i>⊤</i><i class="o">x</i></div></div>
    <div class="wb">
      <div class="play">
        <div class="lcd"><div class="tm1">-2:31</div><div class="ttl">What Are You Waiting For -- Disturbed (4:12)</div><div class="kb">▶ <b>256</b> KBPS &nbsp;<b>48</b> KHZ &nbsp;<b>∞</b> STEREO</div>
          <svg class="viz" viewBox="0 0 73 22"><path fill="none" stroke="#86a9b5" d="m0 12 2-6 2 6 2-10 2 12 2-12 2 10 2-8 2 9 2-10 2 5 3-3 2 4 3-1 2 5 3-3 2 5 3-5 2 7 3 2 2-3 2-5 3 6 2-7 3 8 2-4 3 4 2-8 2 10 3-4 2-6 2 9"/><path stroke="#35464c" stroke-width="4" stroke-dasharray="1 2 2 1" d="M0 20h73"/></svg></div>
        <div class="vol"><i class="btn">◂)</i><div class="sl"><u></u></div></div>
        <div class="seek"><u></u></div>
        <div class="ctl"><i>⏮</i><i>▶</i><i>❚❚</i><i>■</i><i>⏭</i><i class="sp">⏏</i><i class="rp">⑫</i><i class="rq">⮌</i><svg><use href="#t-bolt"/></svg></div>
      </div>
      <div class="eq">
        <svg viewBox="0 0 187 90"><g fill="#ccc"><rect x="3" y="1" width="22" height="10" rx="1"/></g><path stroke="#222" stroke-width="1.500" stroke-dasharray="2 1" d="M6 6h15"/><path fill="#333" d="M28 1h40v10H28z"/><path fill="#111" d="m37 3-4 3 4 3zm22 0 4 3-4 3z"/><text x="45" y="9">0</text><text x="88" y="9">L</text><text x="175" y="9">R</text><path stroke="#000" stroke-width="2" d="M97 7h74"/><rect class="th" x="126" y="2" width="15" height="9" rx="2"/>
          <path stroke="#4a4f52" stroke-dasharray="1 1" d="M28 22h155M28 38h155M28 54h155"/>
          <path stroke="#050505" stroke-width="4" d="M9 16v49M34 16v49M50 16v49M66 16v49M82 16v49M98 16v49M114 16v49M130 16v49M146 16v49M162 16v49M178 16v49"/>
          <path stroke="#3a3d3f" d="M9 16v49M34 16v49M50 16v49M66 16v49M82 16v49M98 16v49M114 16v49M130 16v49M146 16v49M162 16v49M178 16v49"/>
          <g class="th"><rect x="5.500" y="31" width="7" height="15" rx="2"/><rect x="30.500" y="27" width="7" height="15" rx="2"/><rect x="46.500" y="40" width="7" height="15" rx="2"/><rect x="62.500" y="36" width="7" height="15" rx="2"/><rect x="78.500" y="31" width="7" height="15" rx="2"/><rect x="94.500" y="31" width="7" height="15" rx="2"/><rect x="110.500" y="31" width="7" height="15" rx="2"/><rect x="126.500" y="26" width="7" height="15" rx="2"/><rect x="142.500" y="26" width="7" height="15" rx="2"/><rect x="158.500" y="27" width="7" height="15" rx="2"/><rect x="174.500" y="25" width="7" height="15" rx="2"/></g>
          <g class="s"><text x="16" y="25">+12</text><text x="16" y="43">+0</text><text x="16" y="61">-12</text><text x="4" y="74">PRE</text><text x="30" y="74">70</text><text x="45" y="74">180</text><text x="60" y="74">320</text><text x="76" y="74">600</text><text x="94" y="74">1K</text><text x="110" y="74">3K</text><text x="126" y="74">6K</text><text x="141" y="74">12K</text><text x="157" y="74">14K</text><text x="173" y="74">16K</text></g>
          <path fill="#bbb" d="M1 78h24v11H5zM26 78h29v11H26zM56 78h45v11H56zM114 78h22v11h-22zM137 78h23v11h-23zM161 78h25l-3 11h-22z"/><g class="k"><text x="7" y="87" class="c">ON</text><text x="30" y="87">AUTO</text><text x="60" y="87">PRESETS</text><text x="121" y="87">⌕</text><text x="144" y="87">⇥</text><text x="167" y="87">□≡</text></g></svg>
      </div>
      <div class="pl"><div class="plist"><span>1. What Are You Waiting For -- Disturbed</span><span>4:12</span></div><div class="plb"><i>+</i><i>−</i><i>⛶</i><i>MISC</i><i>≡</i><b>0:00/4:12</b><i class="e">⇕</i></div></div>
    </div>
  </div>
  <div class="bar three">
    <div class="tb"><svg><use href="#chrome"/></svg><span>T</span></div><div class="tb"><svg><use href="#chrome"/></svg><span>I</span></div><div class="tb"><svg><use href="#chrome"/></svg><span>V</span></div><div class="tb"><svg><use href="#chrome"/></svg><span>F</span></div><div class="tb"><svg><use href="#folder"/></svg><span>Y</span></div><div class="tb"><svg><use href="#rl"/></svg><span>F</span></div><div class="tb"><svg><use href="#chrome"/></svg><span>H</span></div><div class="tb"><svg><use href="#chrome"/></svg><span>F</span></div><div class="tb"><svg><use href="#folder"/></svg><span>M</span></div><div class="tb"><svg><use href="#notepad"/></svg><span>U</span></div><div class="tb"><svg><use href="#calc"/></svg><span>C</span></div><div class="tb"><svg><use href="#notepad"/></svg><span>k</span></div><div class="tb"><svg><use href="#photo"/></svg><span>S</span></div><div class="tb"><svg><use href="#chrome"/></svg><span>E</span></div><div class="tb"><svg><use href="#notepad"/></svg><span>U</span></div><div class="tb"><svg><use href="#steam"/></svg><span>F</span></div><div class="tb"><svg><use href="#chrome"/></svg><span>F</span></div><div class="tb"><svg><use href="#folder"/></svg><span>B</span></div><div class="tb"><svg><use href="#firefox"/></svg><span>A</span></div><div class="tb"><svg><use href="#bolt"/></svg><span>1</span></div>
  </div>
</section>
</main>
</body>
</html>
```
FILE: styles.css
```css
html { background: #000; overflow: hidden; }
body { margin: 0; font: 12px "Open Sans", "Noto Sans", sans-serif; letter-spacing: -.2px; }
* { box-sizing: border-box; }
i, em { font-style: normal; }
.defs { position: absolute; }
.desk { zoom: .7111111; width: 5760px; height: 1440px; display: flex; align-items: flex-start; background: #000; overflow: hidden; }
.mon { position: relative; display: flex; flex-direction: column; flex: none; overflow: hidden; background: #fff; }
.mon.one { width: 2560px; height: 1440px; }
.mon.two { width: 1920px; height: 1080px; margin-top: 162px; }
.mon.three { width: 1280px; height: 1024px; margin-top: 218px; }
svg { width: 16px; height: 16px; flex: none; }
span { white-space: nowrap; }

/* firefox chrome */
.tabs { height: 33px; flex: none; display: flex; padding-top: 1px; background: linear-gradient(#7db7d2, #5f9fc2 50%, #7fbad6); }
.one .tabs { background: linear-gradient(90deg, #7ab0c8, #4f8298 92%, #8fd0ea 94%, #6cb0cf 97%, #7dbbd6); }
.three .tabs { background: linear-gradient(transparent 60%, #8ed1f088), linear-gradient(90deg, #5ba3c9 36%, #d8f2ff 39%, #4f9cc4 43%, #5ea7cf 60%, #4a93ba 85%, #79bde0); }
.tab { width: 183.200px; display: flex; align-items: center; padding-left: 9px; background: #20233f; color: #f4f4f8; border-right: 1px solid #5a5d78; }
.three .tab { width: 225px; }
.tab span { margin-left: 6px; width: 124px; overflow: hidden; -webkit-mask-image: linear-gradient(90deg, #000 80%, transparent); mask-image: linear-gradient(90deg, #000 80%, transparent); }
.three .tab span { width: 165px; }
.tab .cl { width: 10px; height: 10px; margin-left: 5px; }
.three .tab .cl { margin-left: 6px; }
.tab.on { background: #f9f9fa; color: #0c0c0d; border-top: 2px solid #0a84ff; }
.glow { width: 32px; text-align: center; font: bold 18px/30px "Open Sans"; color: #fff; background: radial-gradient(#e9f8ff99, transparent 75%); }
.winb { width: 104px; height: 18px; margin: -1px 3px 0 auto; background: linear-gradient(#ffffff55, #ffffff22 50%, #00000011); border: 1px solid #3f6a80; border-top: 0; border-radius: 0 0 5px 5px; }
.nav { height: 41px; flex: none; display: flex; align-items: center; background: #f9f9fa; border-bottom: 1px solid #dcdcde; color: #5a5a5d; padding-left: 3px; }
.nb { display: flex; align-items: center; width: 247px; }
.three .nb { width: 188px; }
.circ { width: 34px; height: 34px; border: 1px solid #b5b5b8; border-radius: 50%; background: #fff; display: flex; align-items: center; justify-content: center; }
.nb > svg { margin-left: 16px; }
.nb > svg:nth-child(2) { margin-left: 8px; }
.dim { color: #b5b5b8; }
.url, .find { height: 30px; background: #fff; border: 1px solid #b9b9bc; border-radius: 2px; box-shadow: 0 1px 2px #0002; display: flex; align-items: center; font-size: 13.700px; }
.url { width: 1452px; padding: 0 6px; }
.three .url { width: 644px; }
.url .sep { width: 1px; height: 22px; background: #ddd; margin: 0 6px 0 7px; }
.url svg + svg { margin-left: 12px; }
.addr { flex: 1; margin-left: 9px; color: #86868a; letter-spacing: -.42px; }
.addr b, .omni b { font-weight: normal; color: #0c0c0d; }
.find { width: 591px; margin-left: 10px; padding: 0 6px 0 7px; color: #111; letter-spacing: -.4px; }
.three .find { width: 237px; }
.find span { flex: 1; margin-left: 7px; }
.find svg { color: #8a8a8d; }
.find .go { color: #5a5a5d; }
.find.ph { color: #77777a; }
.tools { margin-left: auto; display: flex; align-items: center; gap: 16px; padding-right: 10px; position: relative; }
.tools i { width: 1px; height: 34px; background: #ddd; margin: 0 -4px 0 -4px; }
.tools u { position: absolute; right: 44px; top: 1px; width: 7px; height: 7px; border-radius: 50%; background: #00a5ff; }

/* instagram */
.ighead { height: 78px; flex: none; background: #fff; border-bottom: 1px solid #e9e9e9; display: flex; justify-content: center; }
.igin { width: 1026px; display: flex; align-items: center; }
.igin .cam { width: 31px; height: 31px; }
.igin i { width: 1px; height: 32px; margin: 0 16px 0 20px; background: #262626; }
.word { width: 110px; height: 36px; margin-top: 6px; overflow: visible; }
.word text { font: italic bold 29px "Liberation Serif", serif; fill: #262626; letter-spacing: 0; }
.ighead a { margin-left: auto; font-size: 16px; letter-spacing: -.5px; }
.one a { color: #003569; }
.igbody { flex: 1; background: #fafafa; display: flex; flex-direction: column; align-items: center; font-size: 16px; }
.igbody h1 { margin: 79px 0 0; font: bold 24px/36px "Open Sans"; letter-spacing: -.64px; white-space: nowrap; }
.igbody p { margin: 15px 0 0; line-height: 24px; letter-spacing: -.36px; white-space: nowrap; }
footer { margin-top: auto; padding-bottom: 39px; width: 1026px; display: flex; gap: 19px; font: bold 12px/18px "Open Sans"; letter-spacing: -.5px; color: #555; }
footer span { margin-left: auto; }

/* taskbars */
.bar { height: 40px; flex: none; display: flex; align-items: stretch; background: linear-gradient(#16242b 0 1px, #6e95a3 1px 2px, #3e6675 3px, #2f5462); color: #fff; }
.one .bar { padding-left: 2px; background: linear-gradient(#16242b 0 1px, #8fb5c1 1px 2px, transparent 3px), linear-gradient(90deg, #345b69 55%, #47788a 80%, #4f7f90); }
.tb { position: relative; display: flex; align-items: center; flex: none; width: 159px; margin: 1px 3px 1px 0; padding-left: 6px; border: 1px solid #b9cdd4aa; border-radius: 3px; background: linear-gradient(160deg, #a9bcc4 0, #6c8994 28%, #456672 55%, #40646f); box-shadow: 0 0 0 1px #1b333d; overflow: hidden; }
.tb svg { width: 32px; height: 32px; }
.tb span { margin-left: 8px; font-size: 12.500px; letter-spacing: -.45px; text-shadow: 0 1px 2px #0008; }
.tb.st { width: 152px; margin-right: 10px; box-shadow: 0 0 0 1px #1b333d, 4px 0 0 -1px #55757f, 5px 0 0 0 #1b333d, 8px 0 0 -1px #55757f; }
.two .tb { width: 76.500px; margin-right: 3.200px; padding-left: 5px; }
.two .tb.st { width: 69.500px; margin-right: 10.200px; }
.two .tb span { margin-left: 4px; }
.two .tb.hot { background: linear-gradient(150deg, #fffbe6, #e2d3a0 50%, #fdf2bd); box-shadow: 4px 0 0 -1px #d8ca94, 8px 0 0 -1px #d8ca94; }
.orb { width: 38px; height: 38px; margin: 1px 0 0 8px; }
.ga { width: 32px; height: 32px; margin: 4px 13px 0 23px; }
.desklbl { width: 76px; padding-left: 8px; line-height: 38px; }
.desklbl sup { font-size: 12px; margin-left: 10px; line-height: 0; position: relative; top: -5px; }
.tray { display: flex; gap: 8px; align-items: center; }
.clock { width: 78px; margin-left: auto; text-align: center; line-height: 17px; padding-top: 3px; letter-spacing: -.25px; }
.peek { width: 14px; border: 1px solid #8fb1bd; background: linear-gradient(#7fa0ad, #3f6472); }
.bar.three { position: relative; padding-left: 3px; }
.bar.three .tb { width: 58px; margin-right: 4px; padding-left: 9px; }
.bar.three .tb span { margin-left: 4px; width: 5px; overflow: hidden; }

/* chrome window */
.cstrip { height: 34px; flex: none; display: flex; align-items: flex-start; position: relative; background: linear-gradient(#0000 55%, #dcfcff 68%, #e2feff), linear-gradient(90deg, #8bc4dc, #70aecb 35%, #5796b2 43%, #6eaccb 53%, #5493b1 62%, #70b0cf 75%, #6aabc9); }
.ctab { width: 240px; height: 34px; margin-left: 8px; background: #fff; border-radius: 8px 8px 0 0; display: flex; align-items: center; padding-left: 12px; color: #45494d; }
.ctab span { margin-left: 8px; flex: 1; }
.ctab .cl { width: 9px; height: 9px; margin-right: 12px; color: #5f6368; }
.plus { width: 28px; height: 28px; margin: 3px 0 0 7px; border-radius: 50%; background: #dfe5e9; text-align: center; font: 20px/26px "Open Sans"; color: #333; }
.blobs { display: flex; gap: 38px; padding: 5px 0 0 34px; filter: blur(4px); }
.blobs i { width: 34px; height: 28px; border-radius: 12px; background: #eaffff; }
.blobs i:nth-child(1) { background: #2e5f70; height: 18px; }
.blobs i:nth-child(3) { background: linear-gradient(90deg, #d8c38a 40%, #465bb0 60%); height: 18px; }
.blobs i:nth-child(5) { display: none; }
.two .cstrip .winb { margin: 0 3px 0 auto; }
.cnav { height: 36px; flex: none; display: flex; align-items: center; padding-left: 14px; gap: 16px; color: #5f6368; }
.omni { width: 1445px; height: 28px; margin-left: -2px; border-radius: 14px; background: #f1f3f4; display: flex; align-items: center; padding: 0 10px; font-size: 14px; letter-spacing: -.38px; }
.omni svg + svg { margin-left: 16px; }
.omni .lk { width: 14px; height: 14px; }
.omni span { flex: 1; margin-left: 10px; }
.ext { display: flex; align-items: center; gap: 16px; margin-left: -1px; }
.ext i { position: relative; display: flex; }
.ext em { position: absolute; left: -3px; top: 7px; padding: 0 2px; background: #7b2f00; color: #fff; font: bold 10px/12px "Open Sans"; border-radius: 2px; letter-spacing: -.5px; }
.ext em.r { left: 10px; background: #c5001a; padding: 0 3px; }
.ext u { width: 1px; height: 16px; background: #ccc; margin: 0 -2px; }
.pill { width: 81px; height: 28px; margin-left: -6px; border: 1px solid #1a5fd0; border-radius: 14px; background: #e8f0fe; color: #1a67d8; display: flex; align-items: center; gap: 7px; padding-left: 2px; font-size: 12.500px; }
.pill svg { width: 22px; height: 22px; }
.upd { margin-left: -5px; }
.marks { height: 33px; flex: none; border-bottom: 1px solid #d5d5d8; padding: 0 0 5px 13px; display: grid; align-items: center; color: #3c4043;
  grid-template-columns: 25px 43px 32px 24px 130px 32px 32px 32px 32px 32px 25px 62px 25px 55px 25px 29px 25px 30px 25px 29px 25px 30px 24px 96px 24px 52px 31px 32px 32px 33px 32px 32px 31px 33px 32px 32px 32px 32px 31px 26px 41px 31px 25px 50px 24px 140px 28px 21px 100px; }
.cpage { flex: 1; }
.tm { position: absolute; left: 322px; top: 151px; width: 1442px; height: 791px; background: linear-gradient(#bcdcfb, #b4d4f2 20%, #e4effb 44%, #aacdf0 45%, #b8d8f8); border: 1px solid #141a20; border-radius: 7px; box-shadow: 0 3px 18px #000c, 0 0 6px #000a; padding: 0 6px; display: flex; flex-direction: column; }
.tmt { height: 28px; flex: none; display: flex; align-items: center; color: #111; }
.tmt span { margin-left: 7px; }
.tmt .winb { align-self: flex-start; margin: 0 0 0 auto; background: linear-gradient(90deg, #cfdde9cc 55%, #c9432a 55%); border-color: #445; }
.tmc { height: 756px; border: 1px solid #4d5c6b; background: #fff; padding: 15px 16px 0 14px; display: flex; flex-direction: column; }
.tbl { height: 666px; display: flex; border: 1px solid #d6d6d6; }
.list { flex: 1; min-width: 0; color: #222; overflow: hidden; }
.row { height: 32px; display: grid; grid-template-columns: 31px 28px 915px 140px 69px 92px minmax(0, 1fr); align-items: center; }
.row svg { grid-column: 2; }
.row b { grid-column: 3; font-weight: normal; white-space: nowrap; letter-spacing: -.33px; }
.row span { text-align: right; letter-spacing: -.3px; }
.hd { height: 25px; border-bottom: 1px solid #d0d0d0; }
.hd b { grid-column: 1 / 4; padding-left: 7px; }
.hd i { display: inline-block; margin-left: 8px; border: 4px solid transparent; border-top: 8px solid #222; border-bottom: 0; }
.hd span { border-right: 1px solid #d0d0d0; padding-right: 7px; letter-spacing: -.3px; }
.hd b + span { border-left: 1px solid #d0d0d0; }
.grp { position: relative; }
.grp::before { content: ""; position: absolute; left: 13px; top: 13px; bottom: 13px; width: 6px; border-radius: 3px; background: #c6c6c6; }
.grp.open::before { bottom: 0; border-radius: 3px 3px 0 0; }
.sel { background: #c8c8c8; }
.ud { font: bold 11px "Liberation Serif"; fill: #fff200; letter-spacing: 0; }
.scr { width: 16px; flex: none; background: #f0f0f0; display: flex; flex-direction: column; align-items: center; }
.ua, .da { border: 4px solid transparent; width: 0; }
.ua { border-top: 0; border-bottom: 5px solid #444; margin-top: 6px; }
.da { border-bottom: 0; border-top: 5px solid #444; margin-top: auto; margin-bottom: 6px; }
.thumb { width: 15px; height: 144px; margin-top: 7px; border: 1px solid #999; border-radius: 2px; background: repeating-linear-gradient(#777 0 1px, #eee 1px 3px) center / 7px 8px no-repeat, linear-gradient(90deg, #f6f6f6, #dcdcdc 50%, #c6c6ca); }
.end { align-self: flex-end; margin-top: 24px; width: 97px; height: 32px; flex: none; border: 0; border-radius: 4px; background: #1a73e8; color: #fff; font: 600 12px "Open Sans"; letter-spacing: -.25px; padding: 0; }
.tip { position: absolute; left: 576px; top: 415px; width: 150px; height: 20px; border: 1px solid #666; border-radius: 2px; background: linear-gradient(#fff, #e4e5f0); box-shadow: 2px 2px 3px #0008; color: #555; line-height: 17px; text-align: center; letter-spacing: -.25px; white-space: nowrap; }

/* bitchute */
.bcrow { flex: 1; display: flex; min-height: 0; font-family: "Liberation Sans", sans-serif; letter-spacing: 0; }
.bcpage { width: 1263px; display: flex; flex-direction: column; align-items: center; }
.bcscr { width: 17px; background: #f0f0f0; border-left: 1px solid #ddd; display: flex; flex-direction: column; align-items: center; }
.bit { font: bold 50px "Liberation Sans"; fill: #fff; letter-spacing: 0; }
.chute { font: bold 77px "Liberation Sans"; fill: #ef4037; stroke: #ef4037; stroke-width: 2px; letter-spacing: 0; }
.bcpage header { align-self: stretch; height: 62px; flex: none; background: #f2f2f2; border-bottom: 1px solid #d8d8d8; display: flex; overflow: hidden; }
header .lg { width: 230px; height: 50px; margin: 6px 0 0 15px; }
.wm { width: 853px; height: 61px; margin-left: 165px; }
.wm text { font: bold 300px "Liberation Sans"; letter-spacing: 0; }
.wm .wb { fill: #f2f2f2; }
.wm .wc { fill: #ddd; }
.card { width: 700px; flex: none; background: #f3f3f3; margin-top: 5px; color: #4a4a4a; }
.card h2 { margin: 0; font: bold 24px/26px "Liberation Sans"; }
.top { height: 143px; display: flex; flex-direction: column; align-items: center; padding-top: 15px; }
.top .lg { width: 352px; height: 76px; }
.top h2 { margin-top: 11px; }
.form { margin-top: 3px; height: 288px; padding: 10px 15px 0; display: flex; flex-direction: column; align-items: flex-start; font-size: 14px; }
.form label { font-weight: bold; line-height: 20px; margin-top: 15px; }
.form .inp + label { margin-top: 15px; }
.inp { width: 670px; height: 34px; margin-top: 5px; border: 1px solid #ddd; border-radius: 4px; box-shadow: inset 0 1px 1px #0001; }
.form button { width: 90px; height: 34px; margin-top: 20px; border: 1px solid #d43f3a; border-radius: 4px; background: #d9534f; color: #fff; font: 14px "Liberation Sans"; display: flex; align-items: center; justify-content: center; gap: 5px; padding: 0; }
.form button svg { width: 14px; height: 14px; }
.form p { margin: 16px 0 0; line-height: 20px; letter-spacing: -.1px; }
.form a { color: #ef3a30; }
.legal { margin-top: auto; align-self: stretch; padding: 0 0 6px 51px; color: #777; font-size: 13px; }
.legal p { margin: 0; line-height: 17px; white-space: nowrap; }
.legal p:first-child { padding-left: 7px; }

/* winamp */
.wa { position: absolute; left: 349px; top: 866px; width: 866px; height: 118px; border: 1px solid #000; background: #2f383c; font: 10px "Liberation Sans"; letter-spacing: 0; color: #cfd4d8; }
.wt { height: 17px; display: flex; align-items: center; gap: 13px; padding-left: 5px; background: linear-gradient(#8f909e, #55586a 45%, #2f3244 55%, #3c3f50); border-bottom: 1px solid #000; font-size: 11px; }
.wt em { width: 13px; height: 12px; background: #d08a3d; border-radius: 2px; }
.wt b { margin: 0 5px 0 -5px; font: bold 9px "DejaVu Sans"; letter-spacing: -.2px; color: #fff; }
.wt div { margin-left: auto; display: flex; gap: 4px; padding-right: 4px; }
.wt i { width: 15px; height: 12px; background: #2a2c33; border-radius: 2px; text-align: center; line-height: 11px; font-size: 9px; }
.wt i.o { background: #c97b2e; }
.wa .wb { display: flex; padding: 4px 3px 0 7px; height: 100px; }
.play { width: 302px; display: flex; flex-direction: column; position: relative; }
.lcd { height: 54px; background: #080b0e; clip-path: polygon(0 0, 100% 0, 100% 30px, 178px 30px, 178px 100%, 0 100%); position: relative; }
.tm1 { position: absolute; left: 14px; top: 3px; font: 20px/20px "DejaVu Sans Mono"; color: #a9d3e0; text-shadow: 0 0 3px #5aa; }
.ttl { position: absolute; right: 4px; top: 4px; font: bold 10px/12px "Liberation Sans"; color: #84b3d3; white-space: nowrap; }
.kb { position: absolute; right: 8px; top: 18px; font: 7px/9px "DejaVu Sans Mono"; color: #6d7f86; white-space: nowrap; }
.kb b { color: #a9c4cc; }
.viz { position: absolute; left: 14px; top: 31px; width: 73px; height: 22px; }
.vol { display: flex; align-items: center; justify-content: flex-end; margin-top: -14px; gap: 10px; height: 12px; position: relative; }
.btn { width: 23px; height: 11px; border-radius: 2px; background: linear-gradient(#ddd, #888); color: #333; text-align: center; font-size: 7px; line-height: 11px; }
.sl, .seek { position: relative; width: 76px; height: 2px; background: linear-gradient(90deg, #8aa6ae 25%, #000 30%); margin-right: 2px; }
.seek { width: 298px; margin: 10px 0 0 1px; background: linear-gradient(90deg, #8aa6ae 36%, #000 38%); }
.sl u, .seek u { position: absolute; left: 17px; top: -3px; width: 15px; height: 8px; border-radius: 2px; background: linear-gradient(#fff, #999); }
.seek u { left: 106px; width: 29px; }
.ctl { display: flex; align-items: center; height: 19px; margin-top: 7px; }
.ctl i { width: 20px; height: 18px; margin-right: 1px; border-radius: 2px; background: linear-gradient(#e2e2e2, #888); color: #333; text-align: center; font: 9px/17px "DejaVu Sans"; }
.ctl .sp { margin-left: 85px; margin-right: 6px; width: 23px; height: 12px; line-height: 11px; }
.ctl .rp, .ctl .rq { width: 26px; height: 12px; line-height: 11px; color: #4a8392; }
.ctl svg { margin-left: 7px; }
.eq { width: 189px; margin-left: 7px; padding-left: 1px; border-left: 2px solid #11161a; }
.eq svg { width: 187px; height: 90px; background: linear-gradient(#050607, #16191b); }
.eq text { font: 7px "DejaVu Sans Mono"; fill: #999; letter-spacing: 0; }
.eq .s text { font-size: 6px; fill: #777; }
.eq .k text { font: bold 7.500px "DejaVu Sans"; fill: #333; letter-spacing: -.2px; }
.eq .k .c { fill: #3f8496; }
.th { fill: #d5d5d5; }
.pl { flex: 1; margin-left: 7px; border-left: 2px solid #11161a; padding-left: 2px; }
.plist { height: 78px; background: linear-gradient(#bbb, #888) right 5px top 1px / 7px 18px no-repeat, #08090a; display: flex; justify-content: space-between; padding: 3px 22px 0 3px; font-size: 12px; color: #c9ccce; }
.plb { display: flex; height: 12px; align-items: center; gap: 1px; }
.plb i { width: 23px; height: 11px; background: linear-gradient(#ddd, #999); color: #222; text-align: center; font: bold 7px/11px "DejaVu Sans"; letter-spacing: -.3px; }
.plb b { flex: 1; text-align: center; font: 8px "DejaVu Sans Mono"; color: #9fc0c8; background: #08090a; line-height: 12px; }
```
